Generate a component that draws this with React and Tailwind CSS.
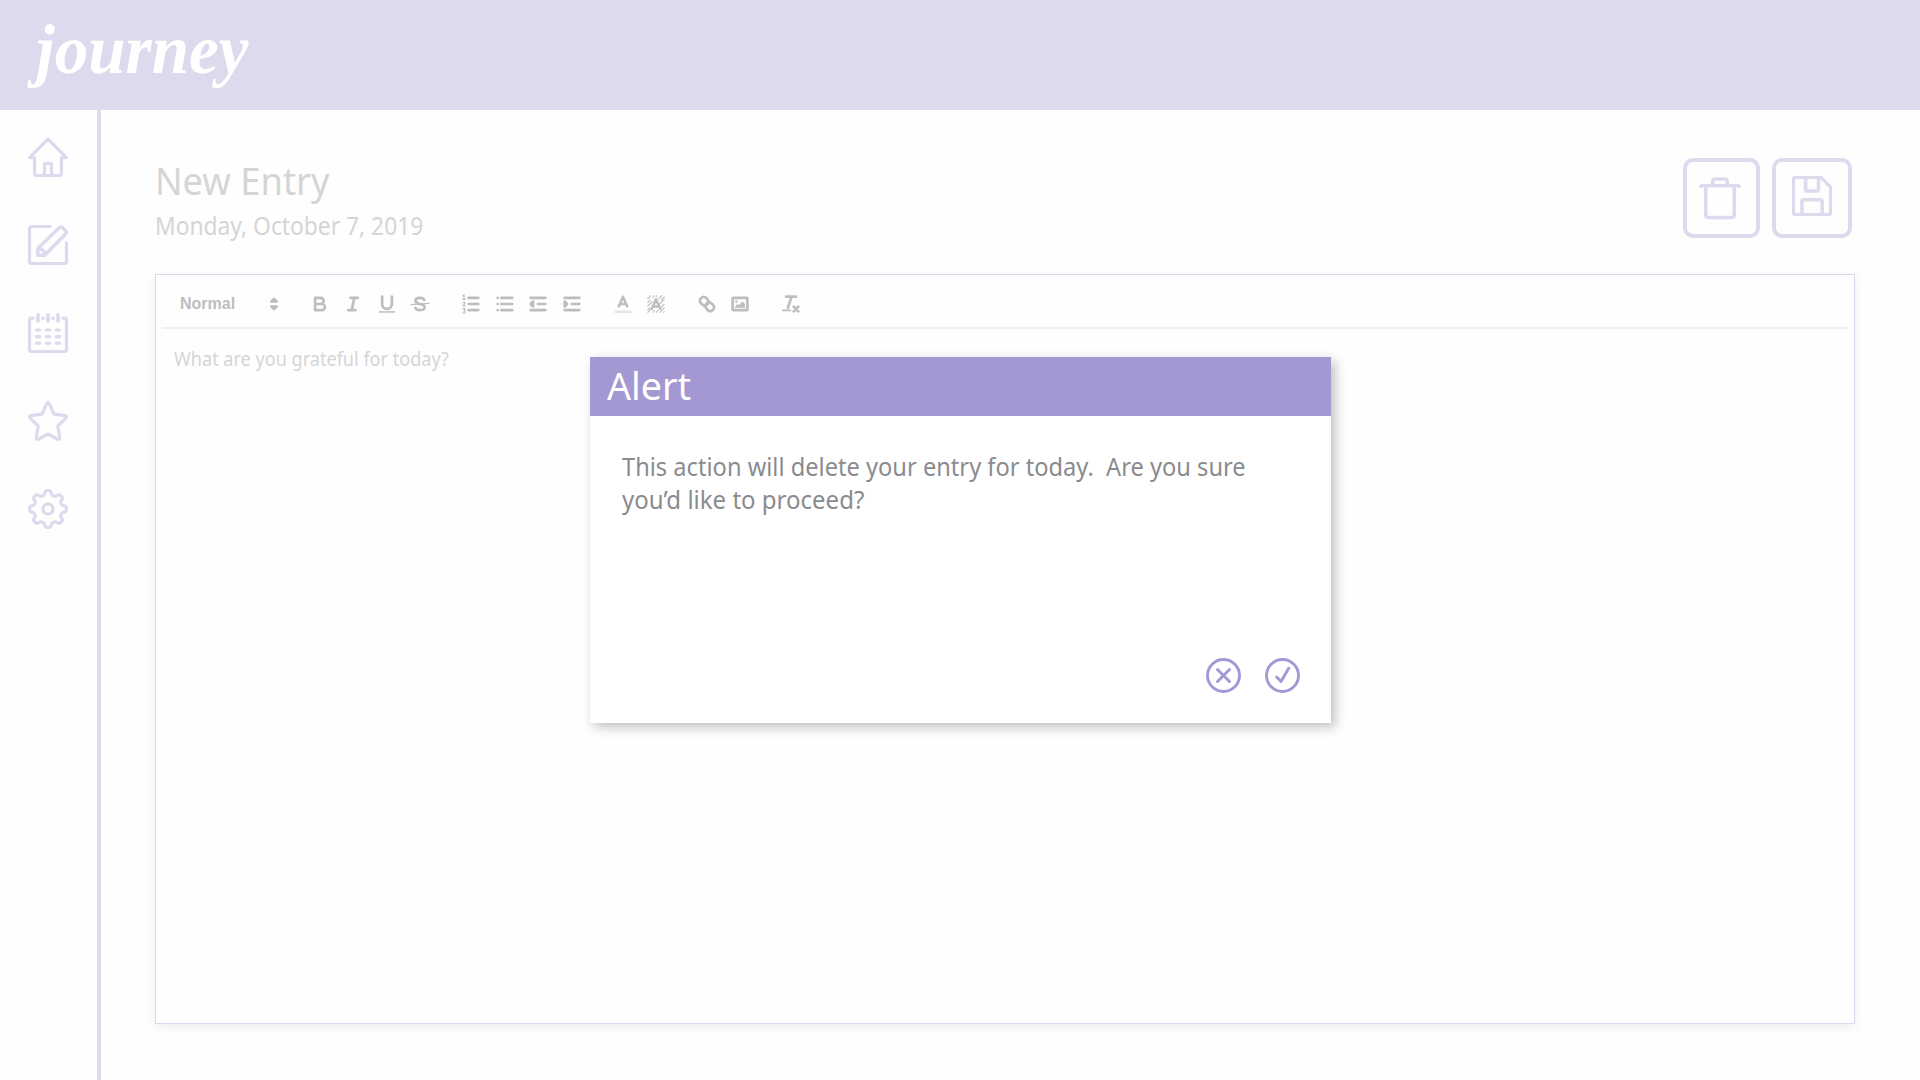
import React, { useLayoutEffect, useRef } from "react";

// Single line of text squeezed or stretched horizontally to a fixed width.
function Fit({ width, className = "", children }) {
  const ref = useRef(null);
  useLayoutEffect(() => {
    const el = ref.current;
    el.style.transform = `scaleX(${width / el.offsetWidth})`;
  }, [width]);
  return (
    <div className={className} style={{ width }}>
      <span ref={ref} className="inline-block origin-left whitespace-pre">
        {children}
      </span>
    </div>
  );
}

const gearPath = (() => {
  const pts = [];
  for (let i = 0; i < 240; i++) {
    const a = (i / 240) * Math.PI * 2;
    const r = 16.4 + 2.1 * Math.tanh(2.2 * Math.cos(8 * a));
    pts.push(`${(20 + r * Math.sin(a)).toFixed(2)} ${(20 - r * Math.cos(a)).toFixed(2)}`);
  }
  return "M" + pts.join("L") + "Z";
})();

function NavIcon({ children }) {
  return (
    <svg className="block size-10 overflow-visible" viewBox="0 0 40 40" fill="none" stroke="currentColor" strokeWidth="3.2" strokeLinejoin="round" strokeLinecap="round">
      {children}
    </svg>
  );
}

function Sidebar() {
  return (
    <nav className="flex w-[100.6px] shrink-0 flex-col gap-12 border-r-4 border-[#dedaee] pl-7 pt-[27px] text-[#dedaee]">
      <NavIcon>
        <path d="M20 2 1.6 20.6H6.6V36.5a2 2 0 0 0 2 2H31.4a2 2 0 0 0 2-2V20.6H38.4Z" />
        <path d="M16.5 38V26.5H23.5V38" />
      </NavIcon>
      <NavIcon>
        <path strokeLinecap="butt" d="M23.5 1.5H3.5a2 2 0 0 0-2 2V36.5a2 2 0 0 0 2 2H36.5a2 2 0 0 0 2-2V16.5" />
        <path strokeWidth="3.4" d="M9.8 30.2V23.4L31.4 2.5a2 2 0 0 1 2.9 0L37.8 6a2 2 0 0 1 0 2.8L16.6 30.2ZM11.6 22.4 18.3 29" />
      </NavIcon>
      <NavIcon>
        <path d="M5.2 5.2H3.5a2 2 0 0 0-2 2V36.5a2 2 0 0 0 2 2H36.5a2 2 0 0 0 2-2V7.2a2 2 0 0 0-2-2H34.8" />
        <path strokeWidth="3.6" d="M10 1.9V8.2M20 1.9V8.2M30 1.9V8.2M14.9 5.2H15.1M24.9 5.2H25.1" />
        <path d="M8.5 17H11.8M18.4 17H21.6M28.2 17H31.5M8.5 23.6H11.8M18.4 23.6H21.6M28.2 23.6H31.5M8.5 30.2H11.8M18.4 30.2H21.6M28.2 30.2H31.5" />
      </NavIcon>
      <NavIcon>
        <path d="M18.8 2.3Q20 .6 21.2 2.3L26 13.2 37.4 14.7Q39.2 15.3 38 17L29.8 25 31.7 37.2Q31.5 39 29.8 38.3L20 33 10.2 38.3Q8.5 39 8.3 37.2L10.2 25 2 17Q.8 15.3 2.6 14.7L14 13.2Z" />
      </NavIcon>
      <NavIcon>
        <path d={gearPath} />
        <circle cx="20" cy="20" r="5" />
      </NavIcon>
    </nav>
  );
}

function Tool({ children }) {
  return (
    <button className="flex w-[33.5px] items-center justify-center">
      <svg className="block size-[22px]" viewBox="0 0 18 18" fill="none" stroke="currentColor" strokeWidth="2.2" strokeLinecap="round" strokeLinejoin="round">
        {children}
      </svg>
    </button>
  );
}

const hatch =
  "M2 5 5 2M2 8 4.4 5.6M6 4 8 2M9 3 10 2M2 11 4 9M2 14 4 12M2 16 5 13M6 16 8 14M9 16 11 14M12 16 16 12M15 16 16 15M13 12 16 9M12 9 16 5M11 5 14 2M13 6 16 3M4 9 6 7M12 4 13 3";

function Toolbar() {
  return (
    <div className="mx-[6px] flex h-[54px] items-center border-b-2 border-[#efefef] pl-[18px] pt-[7px] text-[#bdbdbd]">
      <Fit width={55.5} className="font-['Liberation_Sans'] text-[17px] font-bold leading-5">
        Normal
      </Fit>
      <svg className="ml-[28px] block size-[22px]" viewBox="0 0 18 18" fill="currentColor" stroke="currentColor" strokeWidth="1.9" strokeLinejoin="round">
        <path d="M6.6 11 9 13.3 11.4 11ZM6.6 7 9 4.7 11.4 7Z" />
      </svg>
      <div className="ml-[17.5px] flex gap-[17.4px]">
        <div className="flex">
          <Tool>
            <path d="M5 4H9.5A2.5 2.5 0 0 1 12 6.5 2.5 2.5 0 0 1 9.5 9H5ZM5 9H10.5A2.5 2.5 0 0 1 13 11.5 2.5 2.5 0 0 1 10.5 14H5Z" />
          </Tool>
          <Tool>
            <path d="M7 4H13M5 14H11M8 14 10 4" />
          </Tool>
          <Tool>
            <path d="M5 3V9A4 4 0 0 0 13 9V3" />
            <path strokeWidth="1.2" strokeLinecap="butt" d="M2.5 15.5H15.5" />
          </Tool>
          <Tool>
            <path strokeWidth="1.2" d="M1.5 9.5 16.5 8.5" />
            <path strokeWidth="2.1" d="M12.4 5.7C11.8 4.4 10.6 4 9 4 6.6 4 5.3 5 5.3 6.4 5.3 8 7 8.5 9 9 11.5 9.5 12.8 10.2 12.8 11.7 12.8 13.2 11.2 14 9 14 7 14 5.8 13.4 5.2 12.2" />
          </Tool>
        </div>
        <div className="flex">
          <Tool>
            <path d="M7 4H15M7 9H15M7 14H15" />
            <path strokeWidth="1" d="M2.5 2.2 3.3 1.6V5.2M2.3 5.2H4.3M2.4 7.9Q3.4 7 4.1 7.9 4.2 8.8 2.5 10.5H4.4M2.4 12.9Q4.2 12.2 4.1 13.6 4 14.4 3 14.4 4.4 14.5 4.2 15.7 3.8 16.8 2.4 16.1" />
          </Tool>
          <Tool>
            <path d="M6 4H15M6 9H15M6 14H15M3 4H3.01M3 9H3.01M3 14H3.01" />
          </Tool>
          <Tool>
            <path d="M3 14H15M3 4H15M9 9H15" />
            <path fill="currentColor" d="M5 7V11L3 9Z" />
          </Tool>
          <Tool>
            <path d="M3 14H15M3 4H15M9 9H15" />
            <path fill="currentColor" d="M3 7V11L5 9Z" />
          </Tool>
        </div>
        <div className="flex">
          <Tool>
            <path strokeWidth="2" stroke="#e4e4e4" strokeLinecap="butt" d="M2.2 15.4H15.8" />
            <path strokeWidth="2" d="M5.5 11 9 3 12.5 11M6.7 9H11.3" />
          </Tool>
          <Tool>
            <path strokeWidth=".9" strokeLinecap="butt" d={hatch} />
            <path strokeWidth="2" d="M5.5 13 9 5 12.5 13M6.6 11H11.4" />
          </Tool>
        </div>
        <div className="flex">
          <Tool>
            <path d="M7 11 11 7" />
            <path d="M8.9 4.577a3.476 3.476 0 0 1 .36 4.679A3.476 3.476 0 0 1 4.577 8.9C3.185 7.5 2.035 6.4 4.217 4.217S7.5 3.185 8.9 4.577Z" />
            <path d="M13.423 9.1a3.476 3.476 0 0 0-4.679-.36 3.476 3.476 0 0 0 .36 4.679c1.392 1.392 2.5 2.542 4.679.36S14.815 10.5 13.423 9.1Z" />
          </Tool>
          <Tool>
            <rect x="3" y="4" width="12" height="10" strokeLinejoin="miter" rx=".3" />
            <circle cx="6" cy="7" r="1" fill="currentColor" stroke="none" />
            <path fill="currentColor" stroke="none" d="M5 12V11L7 9 8 10 11 7 13 9V12Z" />
          </Tool>
        </div>
        <div className="flex">
          <Tool>
            <path d="M5 3H13M6.5 12 9.5 3M11.2 11.2 15 15M15 11.2 11.2 15" />
            <path strokeWidth="1.5" strokeLinecap="butt" d="M1.8 14.2H9" />
          </Tool>
        </div>
      </div>
    </div>
  );
}

function Alert() {
  return (
    <section className="absolute left-[590px] top-[357px] flex h-[366px] w-[741px] flex-col bg-white font-['Noto_Sans',sans-serif] shadow-[4px_4px_11px_rgba(0,0,0,0.25)]">
      <header className="h-[59px] bg-[#a398d2] pl-[17px] text-white">
        <Fit width={84} className="text-[39px] leading-[56px]">Alert</Fit>
      </header>
      <div className="flex-1 pl-8 pt-[34px] text-[25.5px] leading-[33px] text-[#8a8b8e]">
        <Fit width={624}>{"This action will delete your entry for today.  Are you sure"}</Fit>
        <Fit width={242}>you’d like to proceed?</Fit>
      </div>
      <footer className="flex justify-end gap-6 pb-[30.5px] pr-[31px] text-[#a398d6]">
        <svg className="block size-[35px]" viewBox="0 0 35 35" fill="none" stroke="currentColor" strokeWidth="2.9" strokeLinecap="round">
          <circle cx="17.5" cy="17.5" r="16" />
          <path d="M11.5 11.5 23.5 23.5M23.5 11.5 11.5 23.5" />
        </svg>
        <svg className="block size-[35px]" viewBox="0 0 35 35" fill="none" stroke="currentColor" strokeWidth="2.9" strokeLinecap="round" strokeLinejoin="round">
          <circle cx="17.5" cy="17.5" r="16" />
          <path d="M11.7 19 16 23.5 23.7 10.3" />
        </svg>
      </footer>
    </section>
  );
}

export default function App() {
  return (
    <div className="relative flex h-[1080px] w-[1920px] flex-col overflow-hidden bg-[#fefefe] font-['Noto_Sans',sans-serif]">
      <header className="h-[110px] shrink-0 bg-[#dedaed] pl-[36px] pt-[7px] text-white">
        <Fit width={213} className="font-['Liberation_Serif',serif] text-[69px] font-bold italic leading-[86px]">journey</Fit>
      </header>
      <div className="flex min-h-0 flex-1">
        <Sidebar />
        <main className="flex flex-1 flex-col pl-[54.4px] pr-[65px]">
          <div className="flex justify-between">
            <div className="pt-[46px] text-[#d5d5d6]">
              <Fit width={175} className="text-[39px] leading-[48px]">New Entry</Fit>
              <Fit width={268} className="mt-[4.5px] text-[25px] leading-8">Monday, October 7, 2019</Fit>
            </div>
            <div className="mr-[3px] mt-12 flex gap-3 text-[#dedaee]">
              <button className="flex h-20 w-[77px] items-center justify-center rounded-[10px] border-4 border-current">
                <svg className="mr-[3px] block h-[43px] w-[42px]" viewBox="0 0 42 43" fill="none" stroke="currentColor" strokeWidth="3.6" strokeLinejoin="round">
                  <path d="M.9 10.6Q1.2 8.7 3.5 8.7H38.5Q40.8 8.7 41.1 10.6M6.8 8.7V38a2.5 2.5 0 0 0 2.5 2.5H32.7A2.5 2.5 0 0 0 35.2 38V8.7M13.8 8.5V4a2 2 0 0 1 2-2H26.2a2 2 0 0 1 2 2V8.5" />
                </svg>
              </button>
              <button className="flex size-20 items-center justify-center rounded-[10px] border-4 border-current">
                <svg className="mb-1 block size-10" viewBox="0 0 40 40" fill="none" stroke="currentColor" strokeWidth="3.2" strokeLinejoin="round">
                  <path d="M3 1.5H29L38.5 11V37a1.5 1.5 0 0 1-1.5 1.5H3A1.5 1.5 0 0 1 1.5 37V3A1.5 1.5 0 0 1 3 1.5Z" />
                  <path strokeWidth="3.5" d="M13.6 2V13.4a1.5 1.5 0 0 0 1.5 1.5H25a1.5 1.5 0 0 0 1.5-1.5V2M10 38V25.2a1.5 1.5 0 0 1 1.5-1.5H28.7a1.5 1.5 0 0 1 1.5 1.5V38" />
                </svg>
              </button>
            </div>
          </div>
          <section className="mt-[33px] flex h-[750px] flex-col border border-[#dad8ec] bg-[#fefefe] shadow-[0_3px_10px_rgba(0,0,0,0.07)]">
            <Toolbar />
            <Fit width={275} className="ml-[18px] mt-[18px] text-[19px] leading-6 text-[#d5d5d6]">What are you grateful for today?</Fit>
          </section>
        </main>
      </div>
      <Alert />
    </div>
  );
}
